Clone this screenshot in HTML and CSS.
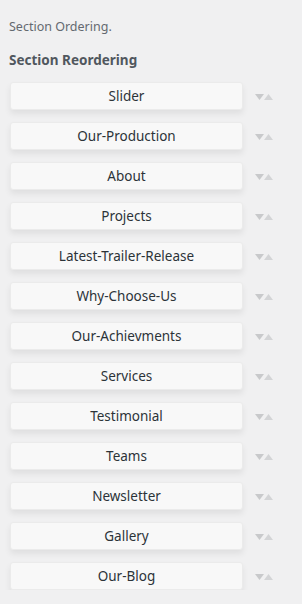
FILE: index.html
```html
<!DOCTYPE html>
<html>
<head>
<meta charset="utf-8">
<link rel="stylesheet" href="styles.css">
</head>
<body>
<div class="panel">
  <p class="desc">Section Ordering.</p>
  <h3 class="title">Section Reordering</h3>
  <ul class="list">
    <li class="row"><span class="item">Slider</span><span class="arrows"><svg width="18" height="6" viewBox="0 0 18 6"><path d="M0 0H9L4.5 6Z" fill="#c8c9cb"/><path d="M9 6L13.5 0L18 6Z" fill="#d3d4d6"/></svg></span></li>
    <li class="row"><span class="item">Our-Production</span><span class="arrows"><svg width="18" height="6" viewBox="0 0 18 6"><path d="M0 0H9L4.5 6Z" fill="#c8c9cb"/><path d="M9 6L13.5 0L18 6Z" fill="#d3d4d6"/></svg></span></li>
    <li class="row"><span class="item">About</span><span class="arrows"><svg width="18" height="6" viewBox="0 0 18 6"><path d="M0 0H9L4.5 6Z" fill="#c8c9cb"/><path d="M9 6L13.5 0L18 6Z" fill="#d3d4d6"/></svg></span></li>
    <li class="row"><span class="item">Projects</span><span class="arrows"><svg width="18" height="6" viewBox="0 0 18 6"><path d="M0 0H9L4.5 6Z" fill="#c8c9cb"/><path d="M9 6L13.5 0L18 6Z" fill="#d3d4d6"/></svg></span></li>
    <li class="row"><span class="item">Latest-Trailer-Release</span><span class="arrows"><svg width="18" height="6" viewBox="0 0 18 6"><path d="M0 0H9L4.5 6Z" fill="#c8c9cb"/><path d="M9 6L13.5 0L18 6Z" fill="#d3d4d6"/></svg></span></li>
    <li class="row"><span class="item">Why-Choose-Us</span><span class="arrows"><svg width="18" height="6" viewBox="0 0 18 6"><path d="M0 0H9L4.5 6Z" fill="#c8c9cb"/><path d="M9 6L13.5 0L18 6Z" fill="#d3d4d6"/></svg></span></li>
    <li class="row"><span class="item">Our-Achievments</span><span class="arrows"><svg width="18" height="6" viewBox="0 0 18 6"><path d="M0 0H9L4.5 6Z" fill="#c8c9cb"/><path d="M9 6L13.5 0L18 6Z" fill="#d3d4d6"/></svg></span></li>
    <li class="row"><span class="item">Services</span><span class="arrows"><svg width="18" height="6" viewBox="0 0 18 6"><path d="M0 0H9L4.5 6Z" fill="#c8c9cb"/><path d="M9 6L13.5 0L18 6Z" fill="#d3d4d6"/></svg></span></li>
    <li class="row"><span class="item">Testimonial</span><span class="arrows"><svg width="18" height="6" viewBox="0 0 18 6"><path d="M0 0H9L4.5 6Z" fill="#c8c9cb"/><path d="M9 6L13.5 0L18 6Z" fill="#d3d4d6"/></svg></span></li>
    <li class="row"><span class="item">Teams</span><span class="arrows"><svg width="18" height="6" viewBox="0 0 18 6"><path d="M0 0H9L4.5 6Z" fill="#c8c9cb"/><path d="M9 6L13.5 0L18 6Z" fill="#d3d4d6"/></svg></span></li>
    <li class="row"><span class="item">Newsletter</span><span class="arrows"><svg width="18" height="6" viewBox="0 0 18 6"><path d="M0 0H9L4.5 6Z" fill="#c8c9cb"/><path d="M9 6L13.5 0L18 6Z" fill="#d3d4d6"/></svg></span></li>
    <li class="row"><span class="item">Gallery</span><span class="arrows"><svg width="18" height="6" viewBox="0 0 18 6"><path d="M0 0H9L4.5 6Z" fill="#c8c9cb"/><path d="M9 6L13.5 0L18 6Z" fill="#d3d4d6"/></svg></span></li>
    <li class="row"><span class="item">Our-Blog</span><span class="arrows"><svg width="18" height="6" viewBox="0 0 18 6"><path d="M0 0H9L4.5 6Z" fill="#c8c9cb"/><path d="M9 6L13.5 0L18 6Z" fill="#d3d4d6"/></svg></span></li>
  </ul>
</div>
</body>
</html>
```

FILE: styles.css
```css
html, body {
  margin: 0;
  padding: 0;
  background: #f0f0f1;
}
body {
  font-family: "Noto Sans", "Open Sans", sans-serif;
  color: #50575e;
}
.panel {
  padding: 18px 0 0 9px;
}
.desc {
  margin: 0;
  font-size: 12.5px;
  line-height: 18px;
  color: #646970;
}
.title {
  margin: 15px 0 0 0;
  font-size: 13.5px;
  line-height: 18px;
  font-weight: 700;
  color: #50575e;
}
.list {
  list-style: none;
  margin: 13px 0 0 0;
  padding: 0;
  display: flex;
  flex-direction: column;
  gap: 12px;
}
.row {
  display: flex;
  align-items: center;
  gap: 12px;
}
.item {
  box-sizing: border-box;
  width: 233px;
  height: 28px;
  margin-left: 1px;
  display: flex;
  align-items: center;
  justify-content: center;
  background: #f8f8f8;
  border: 1px solid #ebebeb;
  border-radius: 3px;
  box-shadow: 0 4px 6px rgba(0, 0, 0, 0.07);
  font-size: 13.5px;
  color: #2c3338;
}
.arrows {
  display: flex;
  align-items: center;
  height: 28px;
}
.arrows svg {
  display: block;
  margin-top: 1px;
}
```
